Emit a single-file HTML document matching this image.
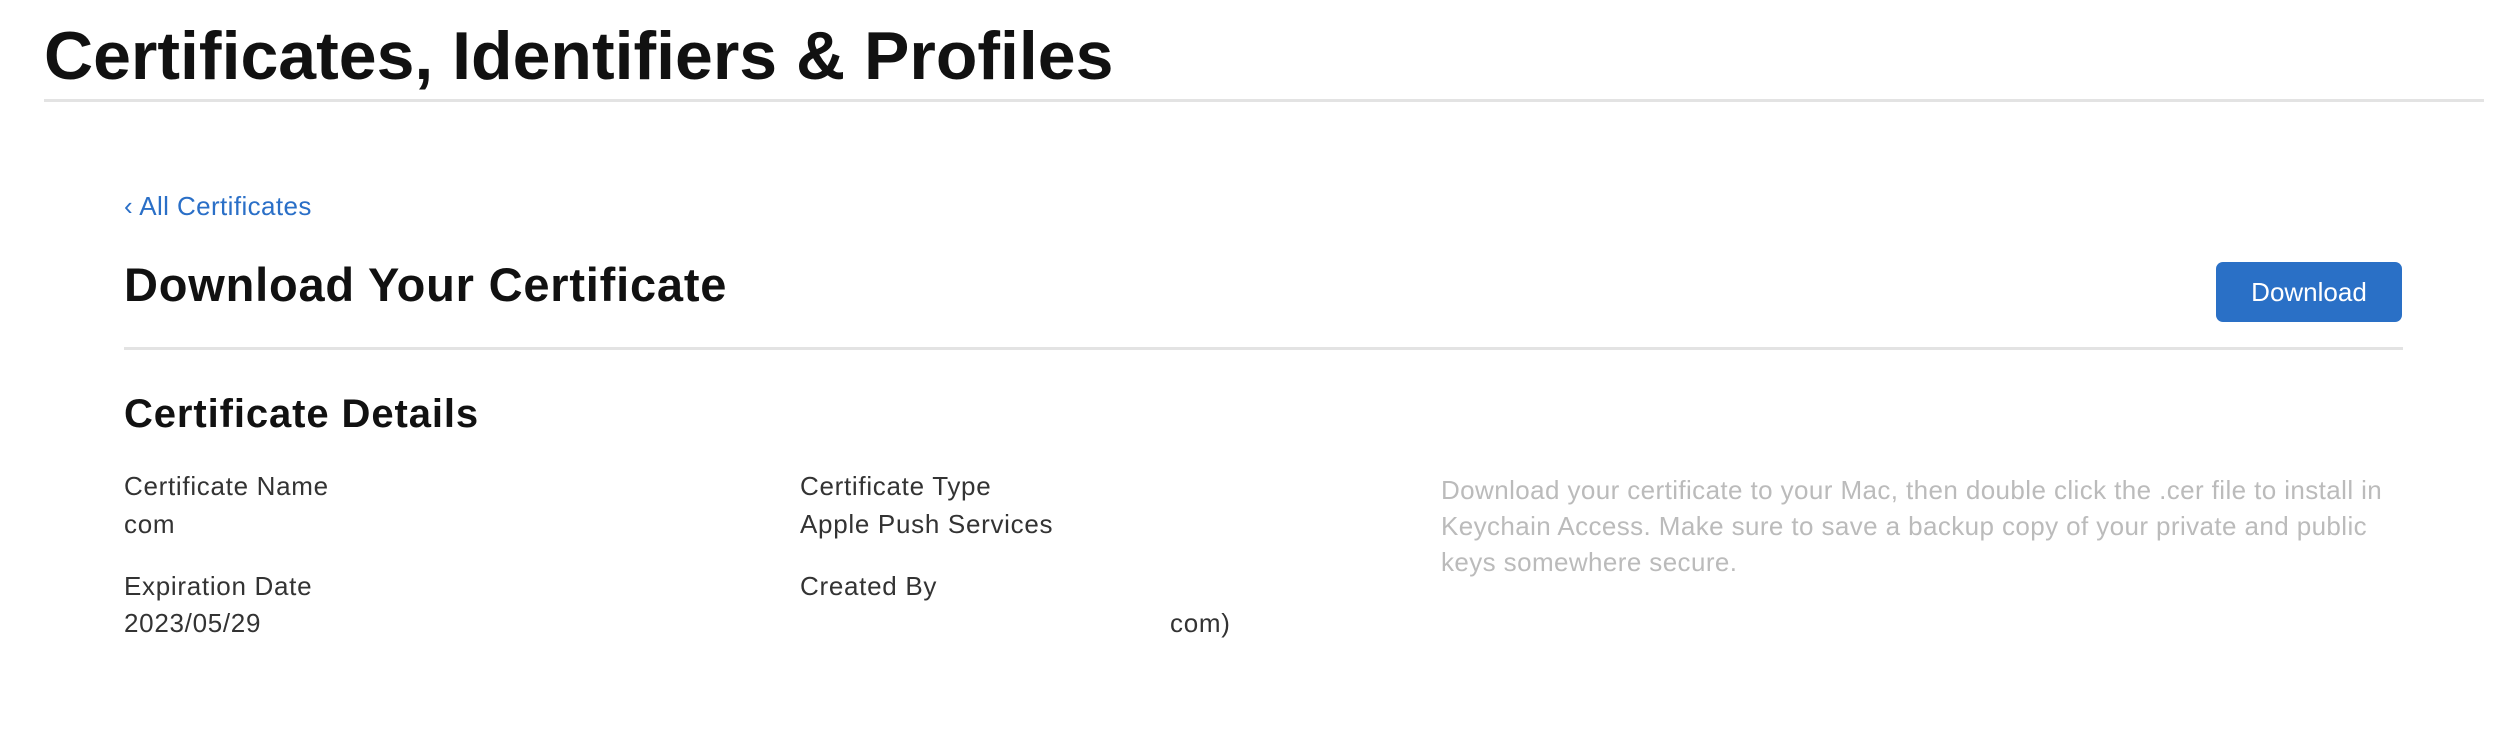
<!DOCTYPE html>
<html><head><meta charset="utf-8"><style>
html,body{margin:0;padding:0;background:#fff;width:2512px;height:738px;overflow:hidden;font-family:"Liberation Sans",Arial,sans-serif;}
.a{position:absolute;white-space:nowrap;line-height:1;}
h1{position:absolute;left:44px;top:22px;margin:0;font-size:68px;font-weight:bold;color:#111;line-height:1;letter-spacing:0px;white-space:nowrap}
.hr{position:absolute;height:3px;background:#e3e3e3}
.lbl{font-size:26px;color:#333;letter-spacing:0.7px}
</style></head><body>
<h1>Certificates, Identifiers &amp; Profiles</h1>
<div class="hr" style="left:44px;top:99px;width:2440px;"></div>
<div class="a" style="left:124px;top:193px;font-size:26px;color:#2a6fc7;letter-spacing:0.4px">‹ All Certificates</div>
<div class="a" style="left:124px;top:261px;font-size:47px;font-weight:bold;color:#111;letter-spacing:0.8px">Download Your Certificate</div>
<div style="position:absolute;left:2216px;top:262px;width:186px;height:60px;background:#2a70c6;border-radius:7px;color:#fff;font-size:26px;text-align:center;line-height:60px">Download</div>
<div class="hr" style="left:124px;top:347px;width:2279px;"></div>
<div class="a" style="left:124px;top:394px;font-size:40px;font-weight:bold;color:#111;letter-spacing:0.9px">Certificate Details</div>
<div class="a lbl" style="left:124px;top:473px">Certificate Name</div>
<div class="a lbl" style="left:124px;top:511px">com</div>
<div class="a lbl" style="left:124px;top:573px">Expiration Date</div>
<div class="a lbl" style="left:124px;top:610px">2023/05/29</div>
<div class="a lbl" style="left:800px;top:473px">Certificate Type</div>
<div class="a lbl" style="left:800px;top:511px">Apple Push Services</div>
<div class="a lbl" style="left:800px;top:573px">Created By</div>
<div class="a lbl" style="left:1170px;top:610px">com)</div>
<div style="position:absolute;left:1441px;top:472px;width:960px;font-size:26px;line-height:36px;color:#bbb;letter-spacing:0.4px">Download your certificate to your Mac, then double click the .cer file to install in Keychain Access. Make sure to save a backup copy of your private and public keys somewhere secure.</div>
</body></html>
